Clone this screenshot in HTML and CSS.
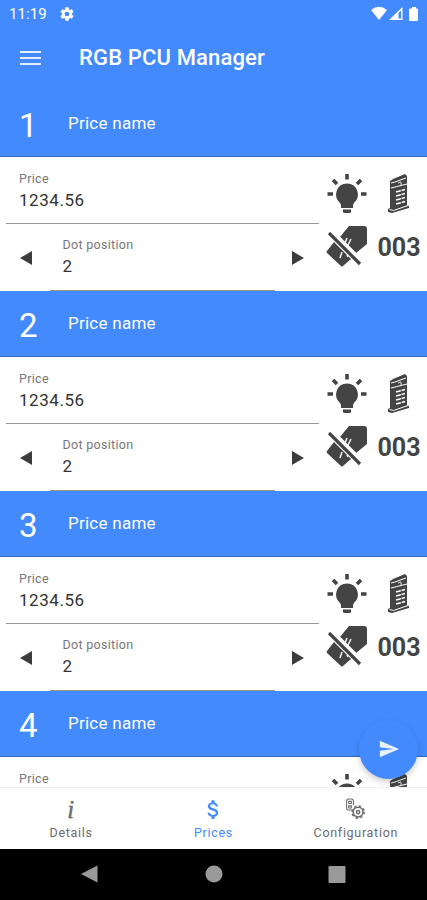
FILE: index.html
```html
<!DOCTYPE html>
<html lang="en">
<head>
    <meta charset="UTF-8">
    <meta name="viewport" content="width=device-width, initial-scale=1.0">
    <title>RGB PCU Manager</title>
    <link rel="stylesheet" href="styles.css">
</head>

<body>
    <!-- Shared icons -->
    <svg class="sprite" xmlns="http://www.w3.org/2000/svg">
        <symbol id="icon-bulb" viewBox="0 0 42 42">
            <path d="M21 10.500a11 11 0 0 0-7 19.400q1 .9 1 2.800v2.300h12v-2.300q0-1.900 1-2.800A11 11 0 0 0 21 10.500z"/>
            <path d="M17 36.500h8v2q0 1.500-1.500 1.500h-5q-1.500 0-1.500-1.500z"/>
            <path d="M21 1v5.500M1.500 21H7M35 21h5.500M7 7l4 4M35 7l-4 4" fill="none" stroke="currentColor" stroke-width="3.600"/>
        </symbol>
        <symbol id="icon-totem" viewBox="0 0 24 42">
            <path d="M3 8 6 6l12-5 2 2v29l2 1v2L5 40l-4-1v-3l2-1z"/>
            <path d="M4 10l4-1 11-4M4 15l16-4M2.500 36.500l4 1L21 32.500" fill="none" stroke="#fff" stroke-width="1"/>
            <path d="M9 19l9-2.500M9 23l9-2.500M9 27l9-2.500M9 31l9-2.500" fill="none" stroke="#fff" stroke-width="1.500" stroke-dasharray="5 .8"/>
            <path d="M11 10l3-1v3" fill="none" stroke="#ddd"/>
        </symbol>
        <symbol id="icon-no-tag" viewBox="0 0 44 42">
            <path d="M24 1h15q3 0 3 3v15L31 28 15 12zM9 17l17 17-8 7q-1 1-2 0L2 28q-1-1 0-2z"/>
            <path d="M7 5.500l28 28" fill="none" stroke="#fff" stroke-width="2.500"/>
            <path d="M22 13l-2 5M26 14l-3 6M17 27l-2 6M22 30l1 2" fill="none" stroke="#eee" stroke-width="1.600"/>
            <path d="M4 8l31 31" fill="none" stroke="currentColor" stroke-width="3.200"/>
        </symbol>
    </svg>

    <div class="app">
        <div class="status-bar">
            <span class="clock">11:19</span>
            <svg class="status-gear" viewBox="0 0 24 24"><path d="M19.430 12.980c.04-.32.07-.64.07-.98s-.03-.66-.07-.98l2.110-1.650c.19-.15.24-.42.12-.64l-2-3.460c-.12-.22-.39-.3-.61-.22l-2.490 1c-.52-.4-1.080-.73-1.690-.98l-.38-2.650C14.460 2.180 14.250 2 14 2h-4c-.25 0-.46.18-.49.42l-.38 2.650c-.61.25-1.170.59-1.690.98l-2.490-1c-.23-.09-.49 0-.61.22l-2 3.460c-.13.22-.07.49.12.64l2.110 1.650c-.04.32-.07.65-.07.98s.03.66.07.98l-2.110 1.650c-.19.15-.24.42-.12.64l2 3.460c.12.22.39.3.61.22l2.490-1c.52.4 1.080.73 1.690.98l.38 2.650c.03.24.24.42.49.42h4c.25 0 .46-.18.49-.42l.38-2.650c.61-.25 1.170-.59 1.690-.98l2.490 1c.23.09.49 0 .61-.22l2-3.460c.12-.22.07-.49-.12-.64l-2.110-1.650zM12 15.500a3.500 3.500 0 1 1 0-7 3.500 3.500 0 0 1 0 7z"/></svg>
            <svg class="status-icons" viewBox="0 0 50 16">
                <path d="M1 4q8-6.500 16 0L9 14z"/>
                <path d="M19 14 32.500 1v13z"/>
                <path d="M28.500 7v5.500h2.500V4.500z" fill="#448aff"/>
                <path d="M41 2.500h1V1h4v1.500h1q1 0 1 1V14q0 1-1 1h-7q-1 0-1-1V3.500q0-1 1-1z"/>
            </svg>
        </div>

        <div class="toolbar">
            <div class="menu-icon"><span></span><span></span><span></span></div>
            <h1>RGB PCU Manager</h1>
        </div>

        <div class="price-list">
            <div class="price-card">
                <div class="price-header"><span class="number">1</span><span class="name">Price name</span></div>
                <div class="price-body">
                    <div class="fields">
                        <div class="field"><label>Price</label><span>1234.56</span></div>
                        <div class="stepper">
                            <i class="arrow left"></i>
                            <div class="field"><label>Dot position</label><span>2</span></div>
                            <i class="arrow right"></i>
                        </div>
                    </div>
                    <div class="actions">
                        <svg class="bulb"><use href="#icon-bulb"/></svg>
                        <svg class="totem"><use href="#icon-totem"/></svg>
                        <svg class="no-tag"><use href="#icon-no-tag"/></svg>
                        <span class="digits">003</span>
                    </div>
                </div>
            </div>

            <div class="price-card">
                <div class="price-header"><span class="number">2</span><span class="name">Price name</span></div>
                <div class="price-body">
                    <div class="fields">
                        <div class="field"><label>Price</label><span>1234.56</span></div>
                        <div class="stepper">
                            <i class="arrow left"></i>
                            <div class="field"><label>Dot position</label><span>2</span></div>
                            <i class="arrow right"></i>
                        </div>
                    </div>
                    <div class="actions">
                        <svg class="bulb"><use href="#icon-bulb"/></svg>
                        <svg class="totem"><use href="#icon-totem"/></svg>
                        <svg class="no-tag"><use href="#icon-no-tag"/></svg>
                        <span class="digits">003</span>
                    </div>
                </div>
            </div>

            <div class="price-card">
                <div class="price-header"><span class="number">3</span><span class="name">Price name</span></div>
                <div class="price-body">
                    <div class="fields">
                        <div class="field"><label>Price</label><span>1234.56</span></div>
                        <div class="stepper">
                            <i class="arrow left"></i>
                            <div class="field"><label>Dot position</label><span>2</span></div>
                            <i class="arrow right"></i>
                        </div>
                    </div>
                    <div class="actions">
                        <svg class="bulb"><use href="#icon-bulb"/></svg>
                        <svg class="totem"><use href="#icon-totem"/></svg>
                        <svg class="no-tag"><use href="#icon-no-tag"/></svg>
                        <span class="digits">003</span>
                    </div>
                </div>
            </div>

            <!-- Cut off by the bottom navigation -->
            <div class="price-card">
                <div class="price-header"><span class="number">4</span><span class="name">Price name</span></div>
                <div class="price-body">
                    <div class="fields">
                        <div class="field"><label>Price</label></div>
                    </div>
                    <div class="actions">
                        <svg class="bulb"><use href="#icon-bulb"/></svg>
                        <svg class="totem"><use href="#icon-totem"/></svg>
                    </div>
                </div>
            </div>
        </div>

        <button class="fab">
            <svg viewBox="0 0 24 24"><path d="M2 21l21-9L2 3v7l15 2-15 2z"/></svg>
        </button>

        <div class="bottom-nav">
            <div class="tab">
                <span class="info-icon">i</span>
                <span>Details</span>
            </div>
            <div class="tab active">
                <svg viewBox="0 0 24 24"><path d="M11.800 10.900c-2.270-.59-3-1.200-3-2.150 0-1.090 1.010-1.850 2.700-1.850 1.780 0 2.440.85 2.500 2.100h2.210c-.07-1.720-1.120-3.300-3.210-3.810V3h-3v2.160c-1.940.42-3.500 1.680-3.500 3.610 0 2.310 1.910 3.460 4.700 4.130 2.500.6 3 1.480 3 2.410 0 .69-.49 1.790-2.700 1.790-2.060 0-2.870-.92-2.980-2.100h-2.200c.12 2.190 1.760 3.420 3.680 3.830V21h3v-2.150c1.950-.37 3.500-1.500 3.500-3.550 0-2.840-2.430-3.810-4.700-4.400z"/></svg>
                <span>Prices</span>
            </div>
            <div class="tab">
                <svg class="config-icon" viewBox="0 0 24 24" fill="none" stroke="currentColor">
                    <path d="M8.500 12.500H5q-1.500 0-1.500-1.500V4q0-2 2-2h2.500q2 0 2 2v4M5.500 4.200h2.500v2H5.500zM5.500 8.500h2.500v2H5.500z"/>
                    <circle cx="14.500" cy="14.500" r="4.700" stroke-width="1.500"/>
                    <circle cx="14.500" cy="14.500" r="1.600" stroke-width="1.400"/>
                    <circle cx="14.500" cy="14.500" r="5.900" stroke-width="1.400" stroke-dasharray="2.200 2.434"/>
                </svg>
                <span>Configuration</span>
            </div>
        </div>

        <div class="system-nav">
            <svg viewBox="0 0 427 51">
                <path d="M81 25 97.500 16.500v17z"/>
                <circle cx="214" cy="25" r="8.500"/>
                <rect x="328.500" y="17" width="17" height="17" rx="1"/>
            </svg>
        </div>
    </div>
</body>
</html>
```

FILE: styles.css
```css
* {
    box-sizing: border-box;
}

body {
    margin: 0;
    font-family: Roboto, "Liberation Sans", sans-serif;
    background: #fff;
    color: #333;
}

.sprite {
    display: none;
}

.app {
    position: relative;
    display: flex;
    flex-direction: column;
    width: 427px;
    height: 900px;
    overflow: hidden;
}

/* Top bars */
.status-bar {
    display: flex;
    align-items: center;
    height: 28px;
    padding: 0 7px 0 9px;
    background: #448aff;
    color: #fff;
}

.clock {
    width: 50px;
    font-size: 15px;
    letter-spacing: 0.1px;
}

.status-gear {
    width: 16px;
    height: 16px;
    fill: #fff;
}

.status-icons {
    width: 50px;
    height: 16px;
    margin-left: auto;
    fill: #fff;
}

.toolbar {
    display: flex;
    align-items: center;
    height: 62px;
    padding: 0 20px 3px;
    background: #448aff;
    color: #fff;
}

.menu-icon {
    display: flex;
    flex-direction: column;
    gap: 4px;
    width: 59px;
}

.menu-icon span {
    width: 21px;
    height: 2px;
    background: #e3edff;
}

.toolbar h1 {
    margin: 0;
    font-size: 22px;
    font-weight: 500;
    letter-spacing: 0.15px;
}

/* Price list */
.price-list {
    flex: 1;
    min-height: 0;
    padding-top: 1px;
    overflow: hidden;
    background: linear-gradient(#448aff 1px, #fff 1px);
}

.price-card {
    height: 200px;
}

.price-header {
    display: flex;
    align-items: center;
    height: 66px;
    padding: 0 19px 1px;
    background: #448aff;
    border-bottom: 1px solid #3568bd;
    color: #fff;
}

.number {
    width: 49px;
    padding-top: 4px;
    font-size: 33px;
}

.name {
    font-size: 17px;
    letter-spacing: 0.25px;
}

.price-body {
    display: flex;
    gap: 7px;
    height: 134px;
    padding-left: 6px;
}

.fields {
    width: 313px;
}

.field {
    display: flex;
    flex-direction: column;
    height: 67px;
    padding: 14px 13px 0;
    border-bottom: 1px solid #999;
}

.field label {
    font-size: 12.5px;
    line-height: 15px;
    letter-spacing: 0.3px;
    color: #777;
}

.field span {
    font-size: 17px;
    line-height: 20px;
    margin-top: 4px;
    letter-spacing: 0.55px;
}

.stepper {
    display: flex;
    align-items: center;
    justify-content: space-between;
    padding: 0 15px 0 14px;
}

.stepper .field {
    width: 225px;
    padding-top: 13px;
}

.arrow {
    border: solid transparent;
    border-width: 7.5px 0;
    margin-top: 1px;
}

.arrow.left {
    border-right: 12px solid #3c3c3c;
}

.arrow.right {
    border-left: 12px solid #3c3c3c;
}

.actions {
    display: grid;
    grid-template-columns: 42px 44px;
    grid-template-rows: 42px 42px;
    gap: 10px 9px;
    align-items: center;
    justify-items: center;
    padding-top: 16px;
    align-content: start;
    color: #444;
    fill: #444;
}

.bulb {
    width: 42px;
    height: 42px;
}

.totem {
    width: 24px;
    height: 42px;
}

.no-tag {
    width: 44px;
    height: 42px;
}

.digits {
    padding-top: 3px;
    font-size: 25px;
    font-weight: 700;
    line-height: 30px;
}

/* Send button */
.fab {
    position: absolute;
    left: 359px;
    top: 720px;
    display: flex;
    align-items: center;
    justify-content: center;
    width: 59px;
    height: 59px;
    padding: 0 0 2px;
    border: none;
    border-radius: 50%;
    background: #448aff;
    box-shadow: 0 3px 6px rgba(0, 0, 0, 0.2);
}

.fab svg {
    width: 22px;
    height: 22px;
    fill: #e8f1ff;
}

/* Bottom navigation */
.bottom-nav {
    display: grid;
    grid-template-columns: repeat(3, 1fr);
    height: 62px;
    background: #fff;
    border-top: 1px solid #f2f2f2;
}

.tab {
    display: flex;
    flex-direction: column;
    align-items: center;
    padding-top: 9px;
    color: #6b6b6b;
    font-size: 12.5px;
    line-height: 16px;
    letter-spacing: 0.7px;
}

.tab svg,
.info-icon {
    width: 25px;
    height: 25px;
    margin-bottom: 3px;
}

.tab svg {
    fill: currentColor;
}

.tab .config-icon {
    fill: none;
}

.info-icon {
    font: italic 25px/25px "Liberation Serif", serif;
    -webkit-text-stroke: 0.4px #6b6b6b;
    text-align: center;
}

.tab.active {
    color: #448aff;
}

.system-nav {
    height: 51px;
    background: #000;
}

.system-nav svg {
    display: block;
    width: 427px;
    height: 51px;
    fill: #9a9a9a;
}
```
